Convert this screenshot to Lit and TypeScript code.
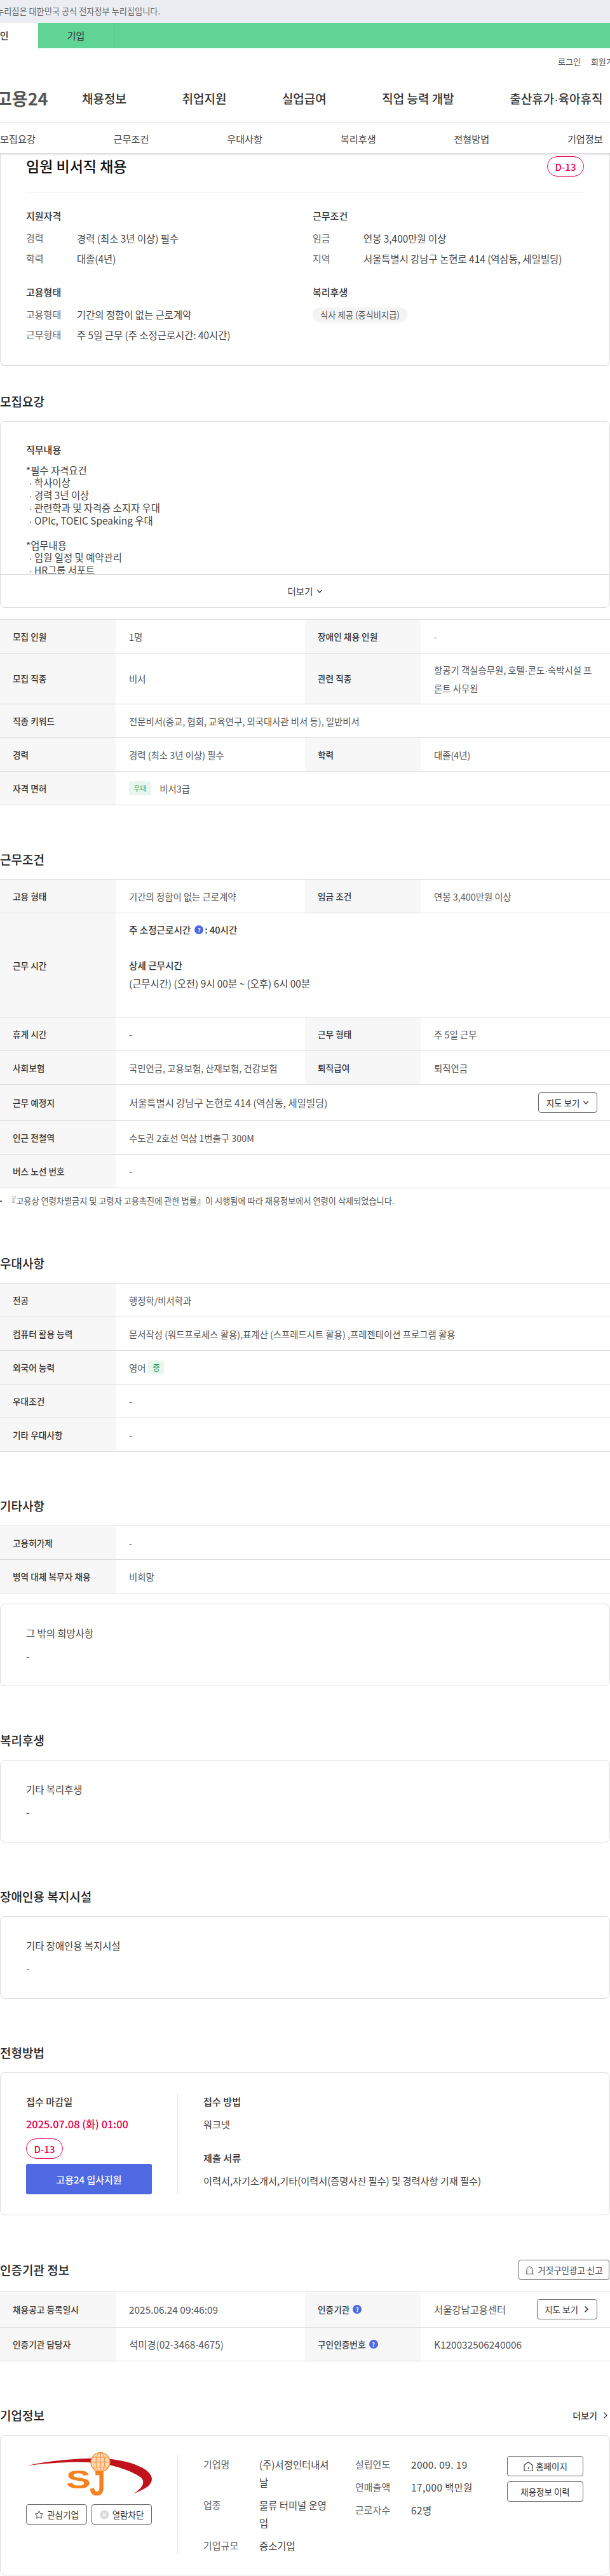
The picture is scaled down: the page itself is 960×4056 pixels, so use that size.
import { LitElement, html, css, svg } from "lit";
import { customElement } from "lit/decorators.js";

const chevDown = (s = 10) => html`<svg class="ic" width=${s} height=${s} viewBox="0 0 10 10" fill="none" stroke="#333" stroke-width="1.2"><path d="M1.5 3l3.5 4 3.5-4"/></svg>`;
const chevRight = (w = 1.6) => html`<svg class="ic" width="10" height="12" viewBox="0 0 10 12" fill="none" stroke="#333" stroke-width=${w}><path d="M2.5 1.5l4.5 4.5-4.5 4.5"/></svg>`;
const help = () => html`<span class="help">?</span>`;
const dot = html`<span class="d">·</span>`;

type Row = { cells: any[]; cls?: string };

@customElement("app-root")
export class AppRoot extends LitElement {
  static styles = css`
    :host { display: block; width: 960px; height: 4056px; overflow: hidden; background: #fff; color: #333;
      font-family: "Noto Sans CJK KR", "Noto Sans", sans-serif; font-size: 15.4px; }
    * { box-sizing: border-box; }
    .ic { display: inline-block; flex: none; }
    .d { font-family: "Liberation Sans", sans-serif; }
    .job-body .d { margin-left: 1px; }
    .gov { height: 36px; background: #eaeef3; color: #666; line-height: 36px; white-space: nowrap; }
    .gov span { display: block; font-size: 13.2px; margin-left: -6px; }
    .tabs { height: 40px; display: flex; background: #5fd494; color: #333; font-size: 15px; line-height: 40px; }
    .tab-a { width: 60px; background: #fff; font-weight: 500; white-space: nowrap; text-indent: -14px; overflow: hidden; }
    .tab-b { width: 120px; text-align: center; border-right: 1px solid #55c586; }
    .util { height: 40px; display: flex; gap: 16px; padding-left: 878px; align-items: center; font-size: 13px; color: #555; white-space: nowrap; }
    .nav { height: 76px; display: flex; align-items: center; gap: 87.5px; margin-left: -6px; white-space: nowrap; font-size: 19px; font-weight: 500; color: #333; }
    .logo { font-size: 27px; font-weight: 700; color: #555; margin-right: -34px; }
    .subnav { height: 49px; border-top: 2px solid #eee; display: flex; gap: 122.7px; align-items: center; font-size: 15.2px; color: #444; white-space: nowrap; box-shadow: 0 2px 3px rgba(0,0,0,.16); position: relative; }
    .card { border: 1px solid #ddd; border-radius: 8px; background: #fff; }
    .top { border-top: 0; border-radius: 0 0 8px 8px; height: 335px; padding: 5px 40px 0; }
    .top-head { display: flex; justify-content: space-between; height: 57px; border-bottom: 1px solid #eee; }
    .top-head h1 { margin: 0; font-size: 23px; line-height: 30px; font-weight: 500; color: #111; }
    .pill { display: inline-flex; align-items: center; justify-content: center; width: 58px; height: 32px; border: 1px solid #e6004c; border-radius: 16px; color: #e6004c; font-size: 15px; font-weight: 500; background: #fff; }
    .top-grid { display: grid; grid-template-columns: 451px 1fr; padding-top: 27px; }
    .group { height: 120px; }
    .group h3 { margin: 0 0 13px; font-size: 15px; line-height: 20px; font-weight: 500; color: #333; }
    .kv { display: grid; grid-template-columns: 80px 1fr; line-height: 24px; margin-bottom: 8px; white-space: nowrap; }
    .kv span:first-child { color: #666; font-size: 15px; }
    .kv span:last-child { color: #444; }
    .chip { display: inline-block; height: 24px; line-height: 24px; padding: 0 12px; margin-top: -4px; border-radius: 12px; background: #f4f4f4; font-size: 13.3px; color: #555; white-space: nowrap; }
    .title { margin: 0; height: 28px; line-height: 28px; font-size: 19px; font-weight: 500; color: #222; white-space: nowrap; display: flex; justify-content: space-between; align-items: center; }
    .t71 { margin-top: 71px; margin-bottom: 17px; }
    .t42 { margin-top: 42px; margin-bottom: 17px; }
    .t74 { margin-top: 74px; margin-bottom: 17px; }
    .t72 { margin-top: 72px; margin-bottom: 19px; }
    .job { height: 294px; overflow: hidden; display: flex; flex-direction: column; }
    .job-body { height: 240px; overflow: hidden; padding: 34px 40px 0; line-height: 19px; color: #444; white-space: pre; }
    .job-body b { display: block; font-weight: 500; font-size: 15px; color: #333; line-height: 20px; margin-bottom: 13px; }
    .more { flex: 1; border-top: 1px solid #ddd; display: flex; justify-content: center; align-items: center; gap: 5px; font-size: 14.5px; color: #444; }
    .table { border-top: 1px solid #ddd; margin-top: 18px; }
    .tnb { margin-top: 0; }
    .row { display: grid; grid-template-columns: 182px 298px 182px 298px; border-bottom: 1px solid #ddd; min-height: 53px; }
    .lab { background: #f7f7f7; padding-left: 20px; display: flex; align-items: center; gap: 5px; font-size: 13.7px; font-weight: 500; color: #333; white-space: nowrap; }
    .val { padding-left: 21px; padding-right: 20px; display: flex; align-items: center; font-size: 14.4px; color: #555; white-space: nowrap; min-width: 0; }
    .big { font-size: 15.4px; }
    .wide { grid-column: span 3; }
    .h80 { min-height: 80px; line-height: 27px; }
    .h57 { min-height: 57px; }
    .h164 { min-height: 164px; }
    .sp { justify-content: space-between; }
    .tag { display: inline-block; height: 22px; line-height: 22px; padding: 0 7.5px; margin-right: 13px; border-radius: 3px; background: #e8f7ed; color: #2b9a56; font-size: 11px; }
    .tag2 { margin: 0 0 0 4px; padding: 0 6.5px; font-size: 13px; }
    .hours { display: block; padding-top: 13px; line-height: 26px; font-size: 15.4px; }
    .hours strong { font-weight: 500; font-size: 14.6px; color: #333; display: flex; align-items: center; }
    .hours .mt { margin-top: 30px; }
    .hours .mt2 { margin-top: 1.5px; color: #444; }
    .help { display: inline-flex; width: 14px; height: 14px; margin: 0 2px 0 6px; border-radius: 50%; background: #4f69e3; color: #fff; font-size: 9px; font-weight: 700; align-items: center; justify-content: center; line-height: 1; flex: none; }
    .lab .help { margin: 0; }
    .btn { display: inline-flex; align-items: center; justify-content: center; gap: 5px; height: 32px; border: 1px solid #666; border-radius: 4px; background: #fff; color: #333; font-size: 13.5px; font-weight: 400; white-space: nowrap; }
    .note { margin-top: 10px; height: 20px; line-height: 20px; font-size: 13.2px; color: #555; padding-left: 12px; white-space: nowrap; position: relative; }
    .note::before { content: ""; position: absolute; left: 0; top: 9px; width: 3px; height: 3px; border-radius: 50%; background: #555; }
    .plain { height: 130px; padding: 33px 40px 0; line-height: 24px; color: #444; }
    .plain div + div { margin-top: 12px; }
    .apply { height: 225px; padding: 32px 40px 0; display: flex; }
    .col-l { width: 239px; padding-right: 40px; border-right: 1px solid #e8e8e8; height: 160px; flex: none; }
    .col-r { padding-left: 40px; flex: 1; }
    .sm { font-size: 15.2px; font-weight: 500; line-height: 24px; color: #333; }
    .dt { font-size: 16.4px; font-weight: 500; line-height: 24px; margin-top: 12px; color: #e6004c; white-space: nowrap; }
    .apply .pill { margin-top: 11px; display: flex; }
    .cta { margin-top: 8px; height: 48px; border-radius: 3px; background: #4f69e3; color: #fff; font-size: 15px; font-weight: 500; display: flex; align-items: center; justify-content: center; }
    .txt { line-height: 24px; margin-top: 12px; color: #444; white-space: nowrap; font-size: 15.2px; }
    .sm.gap { margin-top: 29px; }
    .comp { height: 221px; padding: 31px 39px 0 40px; display: flex; }
    .logo-svg { display: block; width: 199px; height: 65px; overflow: visible; }
    .cbtns { display: flex; justify-content: space-between; margin-top: 12px; }
    .cbtns .btn:first-child { width: 96px; }
    .cbtns .btn:last-child { width: 95px; }
    .comp .col-l { height: 157px; }
    .cgrid { flex: none; padding-left: 40px; display: grid; grid-template-columns: 88px 111px; row-gap: 8px; align-content: start; line-height: 28px; white-space: nowrap; }
    .cgrid2 { padding-left: 40px; width: 279px; grid-template-columns: 88px 151px; }
    .cgrid span:nth-child(odd) { color: #666; font-size: 15px; }
    .cgrid span:nth-child(even) { color: #444; }
    .cgrid2 span:nth-child(even) { letter-spacing: .4px; }
    .cacts { width: 120px; margin-top: 1px; display: flex; flex-direction: column; gap: 8px; flex: none; }
    .link { display: flex; align-items: center; gap: 8px; font-size: 14px; font-weight: 500; color: #333; padding-right: 2px; }
    .rep { width: 143px; margin-right: 1px; color: #444; }
  `;

  tbl(rows: Row[], cls = "") {
    return html`<div class="table ${cls}">
      ${rows.map((r) => html`<div class="row ${r.cls ?? ""}">${r.cells}</div>`)}
    </div>`;
  }
  L(t: any) { return html`<div class="lab">${t}</div>`; }
  V(t: any, c = "") { return html`<div class="val ${c}">${t}</div>`; }

  render() {
    const { L, V } = this;
    return html`
      <div class="gov"><span>누리집은 대한민국 공식 전자정부 누리집입니다.</span></div>
      <div class="tabs"><div class="tab-a">개인</div><div class="tab-b">기업</div></div>
      <div class="util"><span>로그인</span><span>회원가입</span></div>
      <div class="nav"><span class="logo">고용24</span><span>채용정보</span><span>취업지원</span><span>실업급여</span><span>직업 능력 개발</span><span>출산휴가${dot}육아휴직</span></div>
      <div class="subnav"><span>모집요강</span><span>근무조건</span><span>우대사항</span><span>복리후생</span><span>전형방법</span><span>기업정보</span></div>

      <div class="card top">
        <div class="top-head"><h1>임원 비서직 채용</h1><span class="pill">D-13</span></div>
        <div class="top-grid">
          <div class="group"><h3>지원자격</h3>
            <div class="kv"><span>경력</span><span>경력 (최소 3년 이상) 필수</span></div>
            <div class="kv"><span>학력</span><span>대졸(4년)</span></div></div>
          <div class="group"><h3>근무조건</h3>
            <div class="kv"><span>임금</span><span>연봉 3,400만원 이상</span></div>
            <div class="kv"><span>지역</span><span>서울특별시 강남구 논현로 414 (역삼동, 세일빌딩)</span></div></div>
          <div class="group"><h3>고용형태</h3>
            <div class="kv"><span>고용형태</span><span>기간의 정함이 없는 근로계약</span></div>
            <div class="kv"><span>근무형태</span><span>주 5일 근무 (주 소정근로시간: 40시간)</span></div></div>
          <div class="group"><h3>복리후생</h3><span class="chip">식사 제공 (중식비지급)</span></div>
        </div>
      </div>

      <h2 class="title t42">모집요강</h2>
      <div class="card job">
        <div class="job-body"><b>직무내용</b>*필수 자격요건
 ${dot} 학사이상
 ${dot} 경력 3년 이상
 ${dot} 관련학과 및 자격증 소지자 우대
 ${dot} OPIc, TOEIC Speaking 우대

*업무내용
 ${dot} 임원 일정 및 예약관리
 ${dot} HR그룹 서포트</div>
        <div class="more">더보기 ${chevDown()}</div>
      </div>
      ${this.tbl([
        { cells: [L("모집 인원"), V("1명"), L("장애인 채용 인원"), V("-")] },
        { cls: "h80", cells: [L("모집 직종"), V("비서"), L("관련 직종"), V(html`<span>항공기 객실승무원, 호텔${dot}콘도${dot}숙박시설 프<br />론트 사무원</span>`)] },
        { cells: [L("직종 키워드"), V("전문비서(종교, 협회, 교육연구, 외국대사관 비서 등), 일반비서", "wide")] },
        { cells: [L("경력"), V("경력 (최소 3년 이상) 필수"), L("학력"), V("대졸(4년)")] },
        { cells: [L("자격 면허"), V(html`<span class="tag">우대</span>비서3급`, "wide")] },
      ])}

      <h2 class="title t71">근무조건</h2>
      ${this.tbl([
        { cells: [L("고용 형태"), V("기간의 정함이 없는 근로계약"), L("임금 조건"), V("연봉 3,400만원 이상")] },
        { cls: "h164", cells: [L("근무 시간"), html`<div class="val wide hours"><strong>주 소정근로시간${help()}: 40시간</strong><strong class="mt">상세 근무시간</strong><div class="mt2">(근무시간) (오전) 9시 00분 ~ (오후) 6시 00분</div></div>`] },
        { cells: [L("휴게 시간"), V("-"), L("근무 형태"), V("주 5일 근무")] },
        { cells: [L("사회보험"), V("국민연금, 고용보험, 산재보험, 건강보험"), L("퇴직급여"), V("퇴직연금")] },
        { cls: "h57", cells: [L("근무 예정지"), V(html`<span class="big">서울특별시 강남구 논현로 414 (역삼동, 세일빌딩)</span><span class="btn" style="width:93px">지도 보기 ${chevDown()}</span>`, "wide sp")] },
        { cells: [L("인근 전철역"), V("수도권 2호선 역삼 1번출구 300M", "wide")] },
        { cells: [L("버스 노선 번호"), V("-", "wide")] },
      ], "tnb")}
      <div class="note">『고용상 연령차별금지 및 고령자 고용촉진에 관한 법률』이 시행됨에 따라 채용정보에서 연령이 삭제되었습니다.</div>

      <h2 class="title t74">우대사항</h2>
      ${this.tbl([
        { cells: [L("전공"), V("행정학/비서학과", "wide")] },
        { cells: [L("컴퓨터 활용 능력"), V("문서작성 (워드프로세스 활용),표계산 (스프레드시트 활용)  ,프레젠테이션 프로그램 활용", "wide")] },
        { cells: [L("외국어 능력"), V(html`영어<span class="tag tag2">중</span>`, "wide")] },
        { cells: [L("우대조건"), V("-", "wide")] },
        { cells: [L("기타 우대사항"), V("-", "wide")] },
      ], "tnb")}

      <h2 class="title t71">기타사항</h2>
      ${this.tbl([
        { cells: [L("고용허가제"), V("-", "wide")] },
        { cells: [L("병역 대체 복무자 채용"), V("비희망", "wide")] },
      ], "tnb")}
      <div class="card plain" style="margin-top:16px"><div>그 밖의 희망사항</div><div>-</div></div>

      <h2 class="title t71">복리후생</h2>
      <div class="card plain"><div>기타 복리후생</div><div>-</div></div>

      <h2 class="title t71">장애인용 복지시설</h2>
      <div class="card plain"><div>기타 장애인용 복지시설</div><div>-</div></div>

      <h2 class="title t71">전형방법</h2>
      <div class="card apply">
        <div class="col-l">
          <div class="sm">접수 마감일</div>
          <div class="dt">2025.07.08 (화) 01:00</div>
          <span class="pill">D-13</span>
          <div class="cta">고용24 입사지원</div>
        </div>
        <div class="col-r">
          <div class="sm">접수 방법</div>
          <div class="txt">워크넷</div>
          <div class="sm gap">제출 서류</div>
          <div class="txt">이력서,자기소개서,기타(이력서(증명사진 필수) 및 경력사항 기재 필수)</div>
        </div>
      </div>

      <h2 class="title t72">인증기관 정보
        <span class="btn rep"><svg class="ic" width="15" height="15" viewBox="0 0 15 15" fill="none" stroke="#333" stroke-width="1"><path d="M3 13V6.5a4.5 4.5 0 0 1 9 0V13M1 13.5h13"/><path d="M8 4.5a2 2 0 0 1 1.6 1.6" stroke-width=".8"/></svg>거짓구인광고 신고</span></h2>
      ${this.tbl([
        { cls: "h57", cells: [L("채용공고 등록일시"), V(html`<span class="big">2025.06.24 09:46:09</span>`), L(html`인증기관${help()}`), V(html`<span class="big">서울강남고용센터</span><span class="btn" style="width:95px;gap:8px">지도 보기 ${chevRight()}</span>`, "sp")] },
        { cells: [L("인증기관 담당자"), V(html`<span class="big">석미경(02-3468-4675)</span>`), L(html`구인인증번호${help()}`), V(html`<span class="big">K120032506240006</span>`)] },
      ], "tnb")}

      <h2 class="title t71">기업정보<span class="link">더보기 ${chevRight(1.3)}</span></h2>
      <div class="card comp">
        <div class="col-l">
          <svg class="logo-svg" viewBox="0 0 199 65">
            <path d="M0 16.5 C40 8 85 4 120 5 C165 7 198 22 198 37 C198 47 188 53 170 60 C182 52 188 44 182 36 C170 26 140 15 112 12 C75 9 35 12 0 16.5Z" fill="#c1121c"/>
            <circle cx="117" cy="10.7" r="15" fill="#fbd7b4" stroke="#f5821f" stroke-width="1.3"/>
            ${svg`<g fill="none" stroke="#f5821f" stroke-width=".9"><ellipse cx="117" cy="10.7" rx="7" ry="15"/><path d="M117 -4.3V25.7M102 10.7H132M104 3H130M104 18.5H130"/></g>`}
            <text font-family="Liberation Sans" font-weight="700" font-size="41" fill="#f5821f" transform="translate(63 52) scale(1.42 1)">S</text>
            <text font-family="Liberation Sans" font-weight="700" font-size="56" fill="#f5821f" transform="translate(100 63) scale(.8 1)">J</text>
          </svg>
          <div class="cbtns">
            <span class="btn"><svg class="ic" width="15" height="15" viewBox="0 0 15 15" fill="none" stroke="#444" stroke-width="1"><path d="M7.5 1.5l1.9 3.9 4.3.6-3.1 3 .7 4.3-3.8-2-3.8 2 .7-4.3-3.1-3 4.3-.6z"/></svg>관심기업</span>
            <span class="btn"><svg class="ic" width="15" height="15" viewBox="0 0 15 15"><circle cx="7.5" cy="7.5" r="7" fill="#d9d9d9"/><path d="M5 5l5 5M10 5l-5 5" stroke="#fff" stroke-width="1.4"/></svg>열람차단</span>
          </div>
        </div>
        <div class="cgrid">
          <span>기업명</span><span>(주)서정인터내셔<br />날</span>
          <span>업종</span><span>물류 터미널 운영<br />업</span>
          <span>기업규모</span><span>중소기업</span>
        </div>
        <div class="cgrid cgrid2">
          <span>설립연도</span><span>2000. 09. 19</span>
          <span>연매출액</span><span>17,000 백만원</span>
          <span>근로자수</span><span>62명</span>
        </div>
        <div class="cacts">
          <span class="btn" style="gap:3px"><svg class="ic" width="17" height="17" viewBox="0 0 17 17" fill="none" stroke="#333" stroke-width="1.1"><path d="M8.5 1.5L2 6.5V15.5H15V6.5z" stroke-linejoin="round"/><path d="M8.5 9.5v2.5" stroke-width="1.3"/></svg>홈페이지</span>
          <span class="btn">채용정보 이력</span>
        </div>
      </div>
    `;
  }
}
